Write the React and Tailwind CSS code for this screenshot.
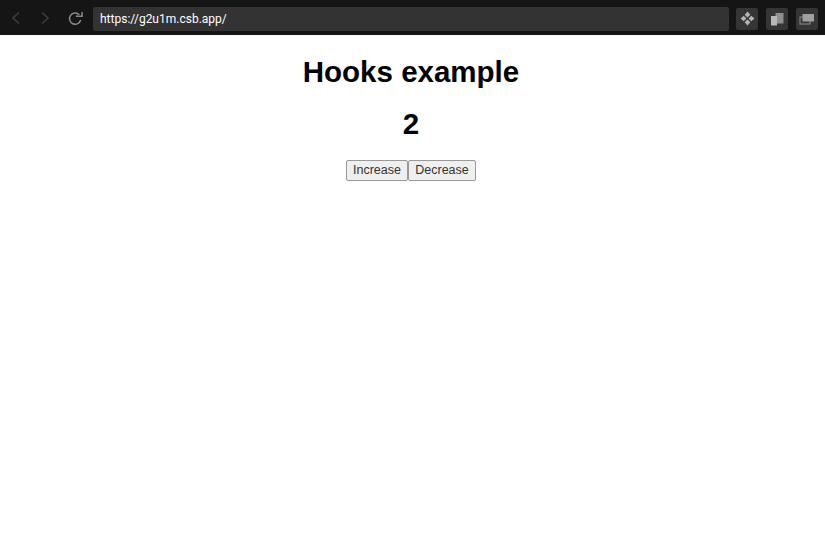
import React, { useState } from 'react';

function App() {
  const [count, setCount] = useState(2);

  return (
    <div className="min-h-screen bg-white font-['Liberation_Sans',sans-serif]">
      <header className="h-[35px] bg-[#151515] flex items-center">
        <div className="w-[93px] flex items-center shrink-0">
          <svg width="12" height="14" viewBox="0 0 12 14" fill="none" stroke="#3e3e3e" strokeWidth="1.6" className="ml-[10px]">
            <path d="M9 1.500 3 7l6 5.500" />
          </svg>
          <svg width="12" height="14" viewBox="0 0 12 14" fill="none" stroke="#3e3e3e" strokeWidth="1.6" className="ml-[17px]">
            <path d="M3 1.500 9 7l-6 5.500" />
          </svg>
          <svg width="15" height="15" viewBox="0 0 16 16" fill="none" stroke="#8a8a8a" strokeWidth="1.6" className="ml-[17px] mt-[1px]">
            <path d="M13.500 9.500A6 6 0 1 1 12 4" />
            <path d="M8.500 5.500h6.500v-4.500" />
          </svg>
        </div>
        <div className="w-[636px] h-[24px] mt-[2px] bg-[#333333] rounded-[2px] flex items-center pl-[7px] text-[12px] text-white font-['Roboto',sans-serif] shrink-0">
          https://g2u1m.csb.app/
        </div>
        <div className="flex gap-[8px] ml-[7px] mt-[2px]">
          <div className="w-[22px] h-[22px] bg-[#353535] rounded-[2px] flex items-center justify-center">
            <svg width="15" height="15" viewBox="0 0 14 14" fill="#b5b5b5">
              <path d="M7 .500 9.600 3.500 7 6 4.400 3.500ZM7 8l2.600 2.500L7 13.500 4.400 10.500ZM3.500 4.400 6 7l-2.500 2.600L.500 7ZM10.500 4.400l3 2.600-3 2.600L8 7Z" />
            </svg>
          </div>
          <div className="w-[22px] h-[22px] bg-[#353535] rounded-[2px] flex items-center justify-center">
            <svg width="14" height="14" viewBox="0 0 14 14">
              <rect x="5.500" y="1" width="8" height="10.500" fill="#8f8f8f" />
              <rect x="1" y="4" width="6" height="9.500" fill="#b8b8b8" />
            </svg>
          </div>
          <div className="w-[22px] h-[22px] bg-[#353535] rounded-[2px] flex items-center justify-center">
            <svg width="16" height="14" viewBox="0 0 16 14">
              <rect x="1" y="5" width="10" height="7" fill="none" stroke="#8f8f8f" />
              <rect x="3.500" y="2" width="11.500" height="7.500" fill="#a0a0a0" />
            </svg>
          </div>
        </div>
      </header>
      <main className="flex flex-col items-center pr-[3px] text-black">
        <h1 className="mt-[20px] text-[29.500px] leading-[34px] font-bold">Hooks example</h1>
        <h2 className="mt-[18px] text-[29.500px] leading-[34px] font-bold">{count}</h2>
        <div className="mt-[19px] flex">
          <button onClick={() => setCount(count + 1)} className="w-[62px] h-[21px] bg-[#efefef] border border-[#999999] rounded-[2px] text-[12.500px] leading-none text-[#333]">Increase</button>
          <button onClick={() => setCount(count - 1)} className="w-[68px] h-[21px] bg-[#efefef] border border-[#999999] rounded-[2px] text-[12.500px] leading-none text-[#333]">Decrease</button>
        </div>
      </main>
    </div>
  );
}

export default App;
